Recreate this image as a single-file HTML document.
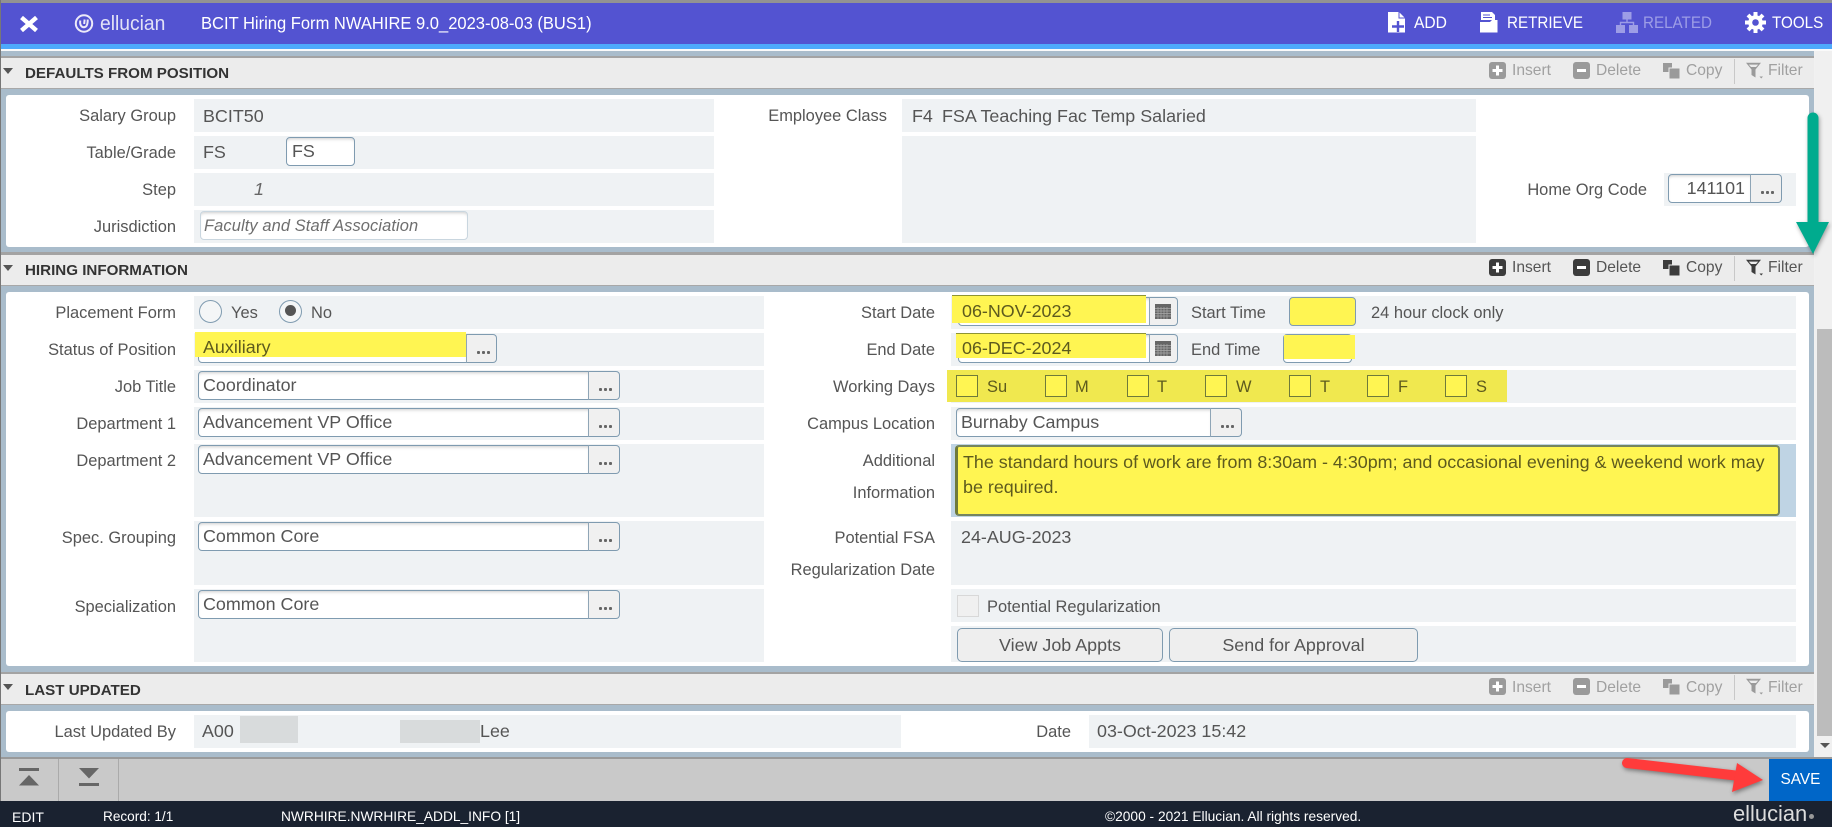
<!DOCTYPE html>
<html><head><meta charset="utf-8"><title>BCIT Hiring Form</title>
<style>
html,body{margin:0;padding:0;width:1832px;height:827px;overflow:hidden;background:#f1f1f1;font-family:"Liberation Sans",Arial,sans-serif}
div,span,svg{position:absolute;box-sizing:border-box}
.t{white-space:nowrap;font-size:16.45px;line-height:20px;height:20px;color:#555;margin-top:1px}
.v{font-size:17.9px}
.w{color:#fff;font-size:16.4px;line-height:20px;height:20px;white-space:nowrap}
.sq{transform-origin:0 50%}
.hd{left:1px;width:1813px;background:#ececec;border-top:2px solid #a3a3a3;border-bottom:1px solid #a8a8a8}
.ht{left:25px;font-size:15.15px;font-weight:bold;color:#333;line-height:20px;white-space:nowrap;margin-top:1px}
.tri{left:3px;width:0;height:0;border-left:5.5px solid transparent;border-right:5.5px solid transparent;border-top:6px solid #555}
.band{left:1px;width:1813px;background:#a9bccb}
.pn{left:6px;width:1803px;background:#fff;border-radius:3px}
.f{background:#eff2f4}
.i{background:#fff;border:1px solid #7f9bb0;border-radius:4px;box-shadow:inset 0 3px 3px -2px #ccc}
.e,.d{background:#f0f0f0;border:1px solid #7f9bb0;border-left:1px solid #8fa5b6;border-radius:0 4px 4px 0}
.e:after{content:"";position:absolute;left:10px;top:16px;width:3px;height:3px;background:#666;box-shadow:5px 0 #666,10px 0 #666;border-radius:1px}
.y{background:#fff552}
.c{background:#fff552;border:1px solid #6f7a3a;width:22px;height:22px;top:375px}
.k{color:#5d5a1e}
.bt{background:#eee;border:1px solid #7f9bb0;border-radius:5px;color:#555;font-size:17.9px;text-align:center;line-height:32px}
.tb{font-size:15.6px;line-height:20px;white-space:nowrap;margin-top:1px}
</style></head><body>

<!-- top bar -->
<div style="left:0;top:0;width:1832px;height:3px;background:#929292"></div>
<div style="left:0;top:3px;width:1832px;height:41px;background:#5353d1"></div>
<div style="left:0;top:44px;width:1832px;height:5px;background:#4ea9fb"></div>
<div style="left:0;top:49px;width:1832px;height:2px;background:#fafafa"></div>
<div style="left:0;top:0;width:1px;height:827px;background:#777"></div>

<svg style="left:19px;top:16px" width="20" height="16" viewBox="0 0 20 16"><path d="M2.5 1.5L17.5 14.5M17.5 1.5L2.5 14.5" stroke="#fff" stroke-width="4.4"/></svg>
<svg style="left:74px;top:14px" width="20" height="19" viewBox="0 0 20 19"><circle cx="10" cy="9.5" r="8.2" fill="none" stroke="#eceaf8" stroke-width="2"/><path d="M6.3 6.5C5.5 11 7.6 13.3 10 13.2C12.6 13.1 13.8 10.5 13.7 5.5M10.6 5.5L10.2 10" fill="none" stroke="#eceaf8" stroke-width="2"/></svg>
<div class="w sq" style="left:100px;top:14px;font-size:20.5px;color:#e2e2f6;transform:scaleX(.94)">ellucian</div>
<div class="w sq" style="left:201px;top:13px;font-size:17.6px;color:#fff;transform:scaleX(.94)">BCIT Hiring Form NWAHIRE 9.0_2023-08-03 (BUS1)</div>

<svg style="left:1388px;top:12px" width="18" height="21" viewBox="0 0 18 21"><path d="M0 0H11L17 6V20.5H0Z" fill="#fff"/><path d="M11 0V6H17" fill="none" stroke="#5353d1" stroke-width="1"/><path d="M10 9V20M4 14.5H16" stroke="#5353d1" stroke-width="2.4"/></svg>
<div class="w sq" style="left:1414px;top:13px;font-size:16.8px;transform:scaleX(.93)">ADD</div>
<svg style="left:1480px;top:12px" width="18" height="21" viewBox="0 0 18 21"><path d="M1 0H12L15 3V8H1Z" fill="#fff"/><path d="M3 3H10M3 5.5H12" stroke="#5353d1" stroke-width="1"/><path d="M0 10H10L12 8H17.5V20.5H0Z" fill="#fff"/></svg>
<div class="w sq" style="left:1507px;top:13px;font-size:16.8px;transform:scaleX(.905)">RETRIEVE</div>
<svg style="left:1616px;top:12px" width="22" height="21" viewBox="0 0 22 21" fill="#9d9de6"><rect x="6.5" y="0" width="9" height="7.5"/><rect x="0" y="13" width="9" height="8"/><rect x="13" y="13" width="9" height="8"/><path d="M11 7.5V11M4.5 13V10.5H17.5V13" fill="none" stroke="#9d9de6" stroke-width="1.4"/></svg>
<div class="w sq" style="left:1643px;top:13px;color:#9d9de6;font-size:16.8px;transform:scaleX(.905)">RELATED</div>
<svg style="left:1745px;top:12px" width="21" height="21" viewBox="0 0 21 21"><circle cx="10.5" cy="10.5" r="5.3" fill="none" stroke="#fff" stroke-width="4"/><g stroke="#fff" stroke-width="4"><path d="M10.5 0V4M10.5 17V21M0 10.5H4M17 10.5H21M3 3L6 6M15 15L18 18M18 3L15 6M6 15L3 18"/></g></svg>
<div class="w sq" style="left:1772px;top:13px;font-size:16.8px;transform:scaleX(.905)">TOOLS</div>

<!-- scrollbar -->
<div style="left:1815px;top:51px;width:17px;height:708px;background:#f0f0f0"></div>
<div style="left:1817px;top:329px;width:15px;height:407px;background:#bcbcbc"></div>
<div style="left:1820px;top:743px;width:0;height:0;border-left:5px solid transparent;border-right:5px solid transparent;border-top:5px solid #555"></div>

<!-- section 1 -->
<div class="band" style="top:51px;height:6px"></div>
<div class="hd" style="top:56px;height:33px"></div>
<div class="tri" style="top:68px"></div>
<div class="ht" style="top:63px">DEFAULTS FROM POSITION</div>
<div class="band" style="top:89px;height:165px"></div>
<div style="left:1px;top:252px;width:1813px;height:2px;background:#a3a3a3"></div>
<div class="pn" style="top:95px;height:152px"></div>

<div class="f" style="left:194px;top:99px;width:520px;height:33px"></div>
<div class="f" style="left:194px;top:136px;width:520px;height:33px"></div>
<div class="f" style="left:194px;top:173px;width:520px;height:33px"></div>
<div class="f" style="left:194px;top:210px;width:520px;height:33px"></div>
<div class="f" style="left:902px;top:99px;width:574px;height:33px"></div>
<div class="f" style="left:902px;top:136px;width:574px;height:107px"></div>
<div class="f" style="left:1664px;top:173px;width:132px;height:33px"></div>

<div class="t" style="right:1656px;top:105px">Salary Group</div>
<div class="t v" style="left:203px;top:105px">BCIT50</div>
<div class="t" style="right:1656px;top:142px">Table/Grade</div>
<div class="t v" style="left:203px;top:141px">FS</div>
<div class="i" style="left:286px;top:137px;width:69px;height:29px"></div>
<div class="t v" style="left:292px;top:140px">FS</div>
<div class="t" style="right:1656px;top:179px">Step</div>
<div class="t v" style="left:254px;top:178px;font-style:italic;color:#666">1</div>
<div class="t" style="right:1656px;top:216px">Jurisdiction</div>
<div class="i" style="left:200px;top:211px;width:268px;height:29px;border-color:#c9d6df"></div>
<div class="t" style="left:204px;top:215px;font-style:italic;color:#6e6e6e;letter-spacing:.1px">Faculty and Staff Association</div>

<div class="t" style="right:945px;top:105px">Employee Class</div>
<div class="t v" style="left:912px;top:105px">F4</div>
<div class="t v" style="left:942px;top:105px">FSA Teaching Fac Temp Salaried</div>

<div class="t" style="right:185px;top:179px">Home Org Code</div>
<div class="i" style="left:1668px;top:174px;width:83px;height:29px;border-radius:4px 0 0 4px"></div>
<div class="e" style="left:1750px;top:174px;width:32px;height:29px"></div>
<div class="t v" style="right:87px;top:177px">141101</div>

<!-- section 2 -->
<div class="hd" style="top:253px;height:33px"></div>
<div class="tri" style="top:265px"></div>
<div class="ht" style="top:260px">HIRING INFORMATION</div>
<div class="band" style="top:286px;height:387px"></div>
<div class="pn" style="top:292px;height:374px"></div>

<div class="f" style="left:194px;top:296px;width:570px;height:33px"></div>
<div class="f" style="left:194px;top:333px;width:570px;height:33px"></div>
<div class="f" style="left:194px;top:370px;width:570px;height:33px"></div>
<div class="f" style="left:194px;top:407px;width:570px;height:33px"></div>
<div class="f" style="left:194px;top:444px;width:570px;height:73px"></div>
<div class="f" style="left:194px;top:521px;width:570px;height:64px"></div>
<div class="f" style="left:194px;top:589px;width:570px;height:73px"></div>

<div class="f" style="left:951px;top:296px;width:845px;height:33px"></div>
<div class="f" style="left:951px;top:333px;width:845px;height:33px"></div>
<div class="f" style="left:951px;top:370px;width:845px;height:33px"></div>
<div class="f" style="left:951px;top:407px;width:845px;height:33px"></div>
<div style="left:951px;top:444px;width:845px;height:73px;background:#bfd4e4"></div>
<div class="f" style="left:951px;top:521px;width:845px;height:64px"></div>
<div class="f" style="left:951px;top:589px;width:845px;height:33px"></div>
<div class="f" style="left:951px;top:626px;width:845px;height:36px"></div>

<div class="t" style="right:1656px;top:302px">Placement Form</div>
<div style="left:199px;top:300px;width:23px;height:23px;border:1.5px solid #7f9bb0;border-radius:50%;background:#f4f6f7"></div>
<div class="t" style="left:231px;top:302px">Yes</div>
<div style="left:279px;top:300px;width:23px;height:23px;border:1.5px solid #7f9bb0;border-radius:50%;background:#f4f6f7"></div>
<div style="left:285px;top:305px;width:11px;height:11px;border-radius:50%;background:#555"></div>
<div class="t" style="left:311px;top:302px">No</div>

<div class="t" style="right:1656px;top:339px">Status of Position</div>
<div class="i" style="left:198px;top:334px;width:269px;height:29px;border-radius:4px 0 0 4px"></div>
<div class="e" style="left:466px;top:334px;width:31px;height:29px"></div>
<div class="y" style="left:195px;top:332px;width:271px;height:25px"></div>
<div class="t v k" style="left:203px;top:336px">Auxiliary</div>

<div class="t" style="right:1656px;top:376px">Job Title</div>
<div class="i" style="left:198px;top:371px;width:391px;height:29px;border-radius:4px 0 0 4px"></div>
<div class="e" style="left:588px;top:371px;width:32px;height:29px"></div>
<div class="t v" style="left:203px;top:374px">Coordinator</div>

<div class="t" style="right:1656px;top:413px">Department 1</div>
<div class="i" style="left:198px;top:408px;width:391px;height:29px;border-radius:4px 0 0 4px"></div>
<div class="e" style="left:588px;top:408px;width:32px;height:29px"></div>
<div class="t v" style="left:203px;top:411px">Advancement VP Office</div>

<div class="t" style="right:1656px;top:450px">Department 2</div>
<div class="i" style="left:198px;top:445px;width:391px;height:29px;border-radius:4px 0 0 4px"></div>
<div class="e" style="left:588px;top:445px;width:32px;height:29px"></div>
<div class="t v" style="left:203px;top:448px">Advancement VP Office</div>

<div class="t" style="right:1656px;top:527px">Spec. Grouping</div>
<div class="i" style="left:198px;top:522px;width:391px;height:29px;border-radius:4px 0 0 4px"></div>
<div class="e" style="left:588px;top:522px;width:32px;height:29px"></div>
<div class="t v" style="left:203px;top:525px">Common Core</div>

<div class="t" style="right:1656px;top:596px">Specialization</div>
<div class="i" style="left:198px;top:590px;width:391px;height:29px;border-radius:4px 0 0 4px"></div>
<div class="e" style="left:588px;top:590px;width:32px;height:29px"></div>
<div class="t v" style="left:203px;top:593px">Common Core</div>

<!-- right column -->
<div class="t" style="right:897px;top:302px">Start Date</div>
<div class="i" style="left:958px;top:297px;width:192px;height:29px;border-radius:4px 0 0 4px"></div>
<div class="d" style="left:1149px;top:297px;width:29px;height:29px"></div>
<div class="y" style="left:952px;top:295px;width:194px;height:28px;border-top:1px solid #8d9334"></div>
<div class="t v k" style="left:962px;top:300px">06-NOV-2023</div>
<svg style="left:1155px;top:304px" width="16" height="15" viewBox="0 0 16 15"><rect width="16" height="15" fill="#666"/><path d="M0 4.5H16M0 7H16M0 9.5H16M0 12H16M3 3V15M6 3V15M9 3V15M12 3V15" stroke="#aaa" stroke-width=".7"/></svg>
<div class="t" style="left:1191px;top:302px">Start Time</div>
<div class="i y" style="left:1289px;top:297px;width:67px;height:29px;box-shadow:none"></div>
<div class="t" style="left:1371px;top:302px">24 hour clock only</div>

<div class="t" style="right:897px;top:339px">End Date</div>
<div class="i" style="left:958px;top:334px;width:192px;height:29px;border-radius:4px 0 0 4px"></div>
<div class="d" style="left:1149px;top:334px;width:29px;height:29px"></div>
<div class="y" style="left:956px;top:333px;width:190px;height:25px;border-top:1px solid #8d9334"></div>
<div class="t v k" style="left:962px;top:337px">06-DEC-2024</div>
<svg style="left:1155px;top:341px" width="16" height="15" viewBox="0 0 16 15"><rect width="16" height="15" fill="#666"/><path d="M0 4.5H16M0 7H16M0 9.5H16M0 12H16M3 3V15M6 3V15M9 3V15M12 3V15" stroke="#aaa" stroke-width=".7"/></svg>
<div class="t" style="left:1191px;top:339px">End Time</div>
<div class="i" style="left:1283px;top:334px;width:69px;height:29px;box-shadow:none"></div>
<div class="y" style="left:1284px;top:335px;width:71px;height:24px"></div>

<div class="t" style="right:897px;top:376px">Working Days</div>
<div style="left:947px;top:370px;width:560px;height:32px;background:#f0e84f"></div>
<div class="c" style="left:956px"></div><div class="t k" style="left:987px;top:376px">Su</div>
<div class="c" style="left:1045px"></div><div class="t k" style="left:1075px;top:376px">M</div>
<div class="c" style="left:1127px"></div><div class="t k" style="left:1157px;top:376px">T</div>
<div class="c" style="left:1205px"></div><div class="t k" style="left:1236px;top:376px">W</div>
<div class="c" style="left:1289px"></div><div class="t k" style="left:1320px;top:376px">T</div>
<div class="c" style="left:1367px"></div><div class="t k" style="left:1398px;top:376px">F</div>
<div class="c" style="left:1445px"></div><div class="t k" style="left:1476px;top:376px">S</div>

<div class="t" style="right:897px;top:413px">Campus Location</div>
<div class="i" style="left:956px;top:408px;width:255px;height:29px;border-radius:4px 0 0 4px"></div>
<div class="e" style="left:1210px;top:408px;width:32px;height:29px"></div>
<div class="t v" style="left:961px;top:411px">Burnaby Campus</div>

<div class="t" style="right:897px;top:450px">Additional</div>
<div class="t" style="right:897px;top:482px">Information</div>
<div class="y" style="left:955px;top:445px;width:825px;height:71px;border:2px solid #75855f;border-left:3px solid #6f7a3a;border-radius:4px"></div>
<div class="t v k" style="left:963px;top:451px">The standard hours of work are from 8:30am - 4:30pm; and occasional evening &amp; weekend work may</div>
<div class="t v k" style="left:963px;top:476px">be required.</div>

<div class="t" style="right:897px;top:527px">Potential FSA</div>
<div class="t" style="right:897px;top:559px">Regularization Date</div>
<div class="t v" style="left:961px;top:526px">24-AUG-2023</div>
<div style="left:957px;top:595px;width:22px;height:22px;background:#f0f0f0;border:1px solid #d8d8d8"></div>
<div class="t" style="left:987px;top:596px">Potential Regularization</div>
<div class="bt" style="left:957px;top:628px;width:206px;height:34px">View Job Appts</div>
<div class="bt" style="left:1169px;top:628px;width:249px;height:34px">Send for Approval</div>

<!-- section 3 -->
<div class="hd" style="top:672px;height:33px"></div>
<div class="tri" style="top:684px"></div>
<div class="ht" style="top:680px">LAST UPDATED</div>
<div class="band" style="top:705px;height:53px"></div>
<div class="pn" style="top:711px;height:41px"></div>
<div class="f" style="left:194px;top:715px;width:707px;height:33px"></div>
<div class="f" style="left:1089px;top:715px;width:707px;height:33px"></div>
<div class="t" style="right:1656px;top:721px">Last Updated By</div>
<div class="t v" style="left:202px;top:720px">A00</div>
<div style="left:240px;top:716px;width:58px;height:27px;background:#d8dbdc"></div>
<div style="left:400px;top:720px;width:80px;height:23px;background:#d8dbdc"></div>
<div class="t v" style="left:480px;top:720px">Lee</div>
<div class="t" style="right:761px;top:721px">Date</div>
<div class="t v" style="left:1097px;top:720px">03-Oct-2023 15:42</div>

<!-- toolbars -->
<svg width="0" height="0" style="position:absolute"><defs>
<symbol id="ins" viewBox="0 0 17 17"><rect width="17" height="17" rx="3" fill="currentColor"/><path d="M8.5 3.5V13.5M3.5 8.5H13.5" stroke="#fff" stroke-width="3"/></symbol>
<symbol id="del" viewBox="0 0 17 17"><rect width="17" height="17" rx="3" fill="currentColor"/><path d="M4 8.5H13" stroke="#fff" stroke-width="3"/></symbol>
<symbol id="cop" viewBox="0 0 17 17"><rect x="0" y="1" width="9" height="9" fill="currentColor"/><rect x="6" y="6" width="11" height="11" fill="currentColor" stroke="#ececec" stroke-width="1"/></symbol>
<symbol id="fil" viewBox="0 0 17 17"><path d="M0 0.8H15L9.5 7.5V15.5L5.5 13V7.5Z" fill="currentColor"/><path d="M2.8 2.6H12.2L10 5H5Z" fill="#ececec"/><path d="M13.5 14.5H17L15.2 16.5Z" fill="currentColor"/></symbol>
</defs></svg>

<svg style="left:1489px;top:62px;color:#9a9a9a" width="17" height="17"><use href="#ins"/></svg>
<div class="tb" style="left:1512px;top:60px;color:#a0a0a0">Insert</div>
<svg style="left:1573px;top:62px;color:#9a9a9a" width="17" height="17"><use href="#del"/></svg>
<div class="tb" style="left:1596px;top:60px;color:#a0a0a0">Delete</div>
<svg style="left:1663px;top:62px;color:#9a9a9a" width="17" height="17"><use href="#cop"/></svg>
<div class="tb" style="left:1686px;top:60px;color:#a0a0a0">Copy</div>
<div style="left:1734px;top:59px;width:1px;height:25px;background:#c8c8c8"></div>
<svg style="left:1746px;top:62px;color:#9a9a9a" width="17" height="17"><use href="#fil"/></svg>
<div class="tb" style="left:1768px;top:60px;color:#a0a0a0">Filter</div>

<svg style="left:1489px;top:259px;color:#3c3c3c" width="17" height="17"><use href="#ins"/></svg>
<div class="tb" style="left:1512px;top:257px;color:#555">Insert</div>
<svg style="left:1573px;top:259px;color:#3c3c3c" width="17" height="17"><use href="#del"/></svg>
<div class="tb" style="left:1596px;top:257px;color:#555">Delete</div>
<svg style="left:1663px;top:259px;color:#3c3c3c" width="17" height="17"><use href="#cop"/></svg>
<div class="tb" style="left:1686px;top:257px;color:#555">Copy</div>
<div style="left:1734px;top:256px;width:1px;height:25px;background:#c8c8c8"></div>
<svg style="left:1746px;top:259px;color:#3c3c3c" width="17" height="17"><use href="#fil"/></svg>
<div class="tb" style="left:1768px;top:257px;color:#555">Filter</div>

<svg style="left:1489px;top:678px;color:#9a9a9a" width="17" height="17"><use href="#ins"/></svg>
<div class="tb" style="left:1512px;top:677px;color:#a0a0a0">Insert</div>
<svg style="left:1573px;top:678px;color:#9a9a9a" width="17" height="17"><use href="#del"/></svg>
<div class="tb" style="left:1596px;top:677px;color:#a0a0a0">Delete</div>
<svg style="left:1663px;top:678px;color:#9a9a9a" width="17" height="17"><use href="#cop"/></svg>
<div class="tb" style="left:1686px;top:677px;color:#a0a0a0">Copy</div>
<div style="left:1734px;top:675px;width:1px;height:25px;background:#c8c8c8"></div>
<svg style="left:1746px;top:678px;color:#9a9a9a" width="17" height="17"><use href="#fil"/></svg>
<div class="tb" style="left:1768px;top:677px;color:#a0a0a0">Filter</div>

<!-- footer -->
<div style="left:1px;top:757px;width:1831px;height:44px;background:#c9c9c9;border-top:2px solid #999"></div>
<div style="left:58px;top:759px;width:1px;height:42px;background:#aaa"></div>
<div style="left:118px;top:759px;width:1px;height:42px;background:#aaa"></div>
<svg style="left:19px;top:768px" width="20" height="18" viewBox="0 0 20 18" fill="#666"><rect width="20" height="3"/><path d="M10 7L20 17.5H0Z"/></svg>
<svg style="left:79px;top:768px" width="20" height="18" viewBox="0 0 20 18" fill="#666"><path d="M0 0H20L10 10.5Z"/><rect y="15" width="20" height="3"/></svg>
<div style="left:1769px;top:759px;width:63px;height:42px;background:#0066c8;color:#fff;font-size:15.4px;line-height:42px;text-align:center">SAVE</div>
<div style="left:0;top:801px;width:1832px;height:26px;background:#1a2230"></div>
<div class="w" style="left:12px;top:807px;font-size:14px">EDIT</div>
<div class="w" style="left:103px;top:807px;font-size:13.6px">Record: 1/1</div>
<div class="w" style="left:281px;top:807px;font-size:13.75px">NWRHIRE.NWRHIRE_ADDL_INFO [1]</div>
<div class="w" style="left:1105px;top:807px;font-size:13.75px">©2000 - 2021 Ellucian. All rights reserved.</div>
<div class="w" style="left:1733px;top:804px;font-size:21.9px;color:#dcdcdc">ellucian</div>
<div style="left:1809px;top:814px;width:5px;height:5px;border-radius:50%;background:#999"></div>

<!-- annotation arrows -->
<svg style="left:1790px;top:105px;filter:drop-shadow(1px 2px 2px rgba(0,0,0,.35))" width="42" height="155" viewBox="0 0 42 155"><path d="M23 13V118" stroke="#00ab8e" stroke-width="11" stroke-linecap="round" fill="none"/><path d="M6 117H39L23 149Z" fill="#00ab8e"/></svg>
<svg style="left:1615px;top:755px;filter:drop-shadow(1px 2px 2px rgba(0,0,0,.4))" width="155" height="44" viewBox="0 0 155 44"><path d="M12 8L125 21" stroke="#ff3b3b" stroke-width="10" stroke-linecap="round"/><path d="M122 8L148 25L117 37Z" fill="#ff3b3b"/></svg>

</body></html>
